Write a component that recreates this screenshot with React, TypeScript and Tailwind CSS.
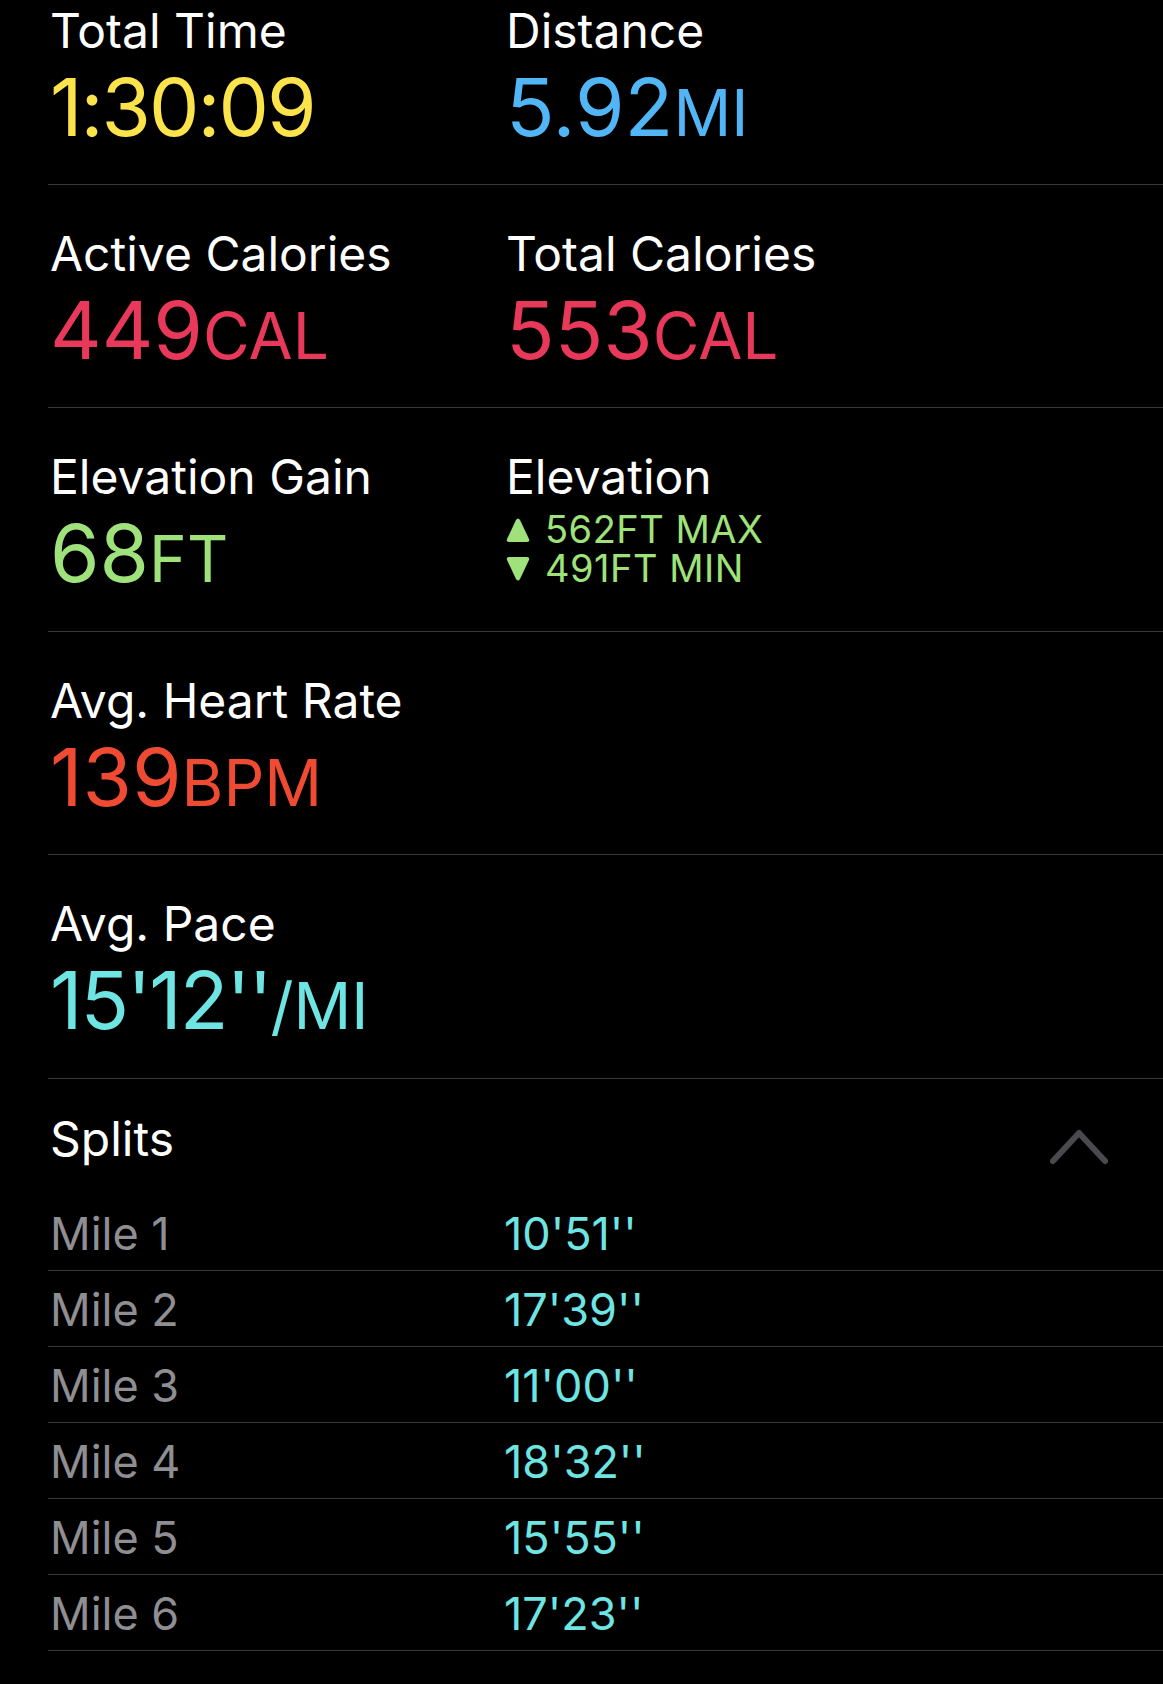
import React from 'react'

interface Metric {
  label: string
  value?: string
  unit?: string
  color: string
  tight?: boolean
}

const splits = [
  { mile: 'Mile 1', pace: "10'51''" },
  { mile: 'Mile 2', pace: "17'39''" },
  { mile: 'Mile 3', pace: "11'00''" },
  { mile: 'Mile 4', pace: "18'32''" },
  { mile: 'Mile 5', pace: "15'55''" },
  { mile: 'Mile 6', pace: "17'23''" },
]

function Label({ children }: { children: React.ReactNode }) {
  return <div className="text-[48px] leading-[56px] text-white">{children}</div>
}

function MetricCell({ metric }: { metric: Metric }) {
  return (
    <div className="w-[456px] pl-[2px]">
      <Label>{metric.label}</Label>
      <div className={`mt-[6px] h-[84px] text-[80px] leading-[84px] whitespace-nowrap ${metric.color}`}>
        <span className={metric.tight ? 'tracking-[-2px]' : ''}>{metric.value}</span>
        <span className="text-[64px] leading-none">{metric.unit}</span>
      </div>
    </div>
  )
}

function Triangle({ up }: { up: boolean }) {
  return (
    <svg width="24" height="26" viewBox="0 0 24 26" className="mr-[15px] shrink-0">
      {up ? (
        <path d="M10 3 Q12 0 14 3 L23 22 Q24 25 21 25 L3 25 Q0 25 1 22 Z" fill="currentColor" />
      ) : (
        <path d="M10 23 Q12 26 14 23 L23 4 Q24 1 21 1 L3 1 Q0 1 1 4 Z" fill="currentColor" />
      )}
    </svg>
  )
}

function StatRow({ top = 'pt-[41px]', bottom = 'pb-[35px]', children }: { top?: string; bottom?: string; children: React.ReactNode }) {
  return <div className={`flex border-b border-[#38383a] ${top} ${bottom}`}>{children}</div>
}

export default function App() {
  return (
    <div className="min-h-screen bg-black pl-[48px] font-[Inter,'Liberation_Sans',sans-serif] text-white">
      <StatRow top="pt-[3px]">
        <MetricCell metric={{ label: 'Total Time', value: '1:30:09', color: 'text-[#fbe34c]', tight: true }} />
        <MetricCell metric={{ label: 'Distance', value: '5.92', unit: 'MI', color: 'text-[#52b6f6]' }} />
      </StatRow>

      <StatRow>
        <MetricCell metric={{ label: 'Active Calories', value: '449', unit: 'CAL', color: 'text-[#e8395b]' }} />
        <MetricCell metric={{ label: 'Total Calories', value: '553', unit: 'CAL', color: 'text-[#e8395b]' }} />
      </StatRow>

      <StatRow bottom="pb-[36px]">
        <MetricCell metric={{ label: 'Elevation Gain', value: '68', unit: 'FT', color: 'text-[#9fe27b]' }} />
        <div className="pl-[2px]">
          <Label>Elevation</Label>
          <div className="mt-[5px] h-[85px] text-[38px] leading-[39px] tracking-[0.5px] text-[#9fe27b]">
            <div className="flex items-center">
              <Triangle up />
              <span>562FT MAX</span>
            </div>
            <div className="flex items-center">
              <Triangle up={false} />
              <span>491FT MIN</span>
            </div>
          </div>
        </div>
      </StatRow>

      <StatRow>
        <MetricCell metric={{ label: 'Avg. Heart Rate', value: '139', unit: 'BPM', color: 'text-[#ef4a32]' }} />
      </StatRow>

      <StatRow bottom="pb-[36px]">
        <MetricCell metric={{ label: 'Avg. Pace', value: "15'12''", unit: '/MI', color: 'text-[#6ee5e2]', tight: true }} />
      </StatRow>

      {/* Splits */}
      <div className="flex h-[116px] justify-between pl-[2px] pt-[32px]">
        <Label>Splits</Label>
        <svg width="58" height="36" viewBox="0 0 58 36" className="mr-[55px] mt-[18px]">
          <path d="M3 32 L29 4 L55 32" fill="none" stroke="#4a4a4e" strokeWidth="6" strokeLinecap="round" strokeLinejoin="round" />
        </svg>
      </div>

      {splits.map((s) => (
        <div key={s.mile} className="flex h-[76px] border-b border-[#38383a] pt-[3px] text-[45px] leading-[72px]">
          <div className="w-[456px] pl-[2px] text-[#8e8e93]">{s.mile}</div>
          <div className="text-[#6ee5e2]">{s.pace}</div>
        </div>
      ))}
    </div>
  )
}
